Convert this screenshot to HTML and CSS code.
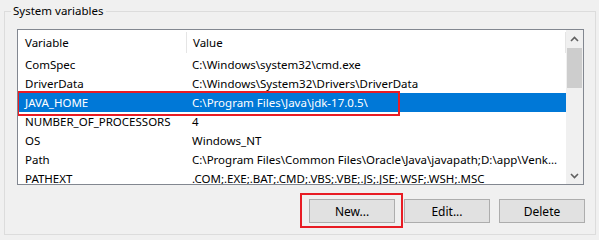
FILE: index.html
```html
<!DOCTYPE html>
<html>
<head>
    <title>Environment Variables</title>
    <link rel="stylesheet" href="styles.css">
</head>
<body>
    <fieldset class="group">
        <legend>System variables</legend>
        <div class="list">
            <div class="list-body">
                <div class="row head">
                    <span class="col-name">Variable</span>
                    <span class="col-value">Value</span>
                </div>
                <div class="row">
                    <span class="col-name">ComSpec</span>
                    <span class="col-value">C:\Windows\system32\cmd.exe</span>
                </div>
                <div class="row">
                    <span class="col-name">DriverData</span>
                    <span class="col-value">C:\Windows\System32\Drivers\DriverData</span>
                </div>
                <div class="row selected">
                    <span class="col-name">JAVA_HOME</span>
                    <span class="col-value">C:\Program Files\Java\jdk-17.0.5\</span>
                    <span class="mark mark-row"></span>
                </div>
                <div class="row">
                    <span class="col-name">NUMBER_OF_PROCESSORS</span>
                    <span class="col-value">4</span>
                </div>
                <div class="row">
                    <span class="col-name">OS</span>
                    <span class="col-value">Windows_NT</span>
                </div>
                <div class="row">
                    <span class="col-name">Path</span>
                    <span class="col-value">C:\Program Files\Common Files\Oracle\Java\javapath;D:\app\Venk...</span>
                </div>
                <div class="row">
                    <span class="col-name">PATHEXT</span>
                    <span class="col-value">.COM;.EXE;.BAT;.CMD;.VBS;.VBE;.JS;.JSE;.WSF;.WSH;.MSC</span>
                </div>
            </div>
            <div class="scrollbar">
                <span class="arrow">
                    <svg width="9" height="6" viewBox="0 0 9 6"><polyline points="1,5 4.5,1.5 8,5" fill="none" stroke="#606060" stroke-width="1.6"/></svg>
                </span>
                <span class="thumb"></span>
                <span class="track"></span>
                <span class="arrow">
                    <svg width="9" height="6" viewBox="0 0 9 6"><polyline points="1,1 4.5,4.5 8,1" fill="none" stroke="#606060" stroke-width="1.6"/></svg>
                </span>
            </div>
        </div>
        <div class="buttons">
            <button class="btn">New...<span class="mark mark-btn"></span></button>
            <button class="btn">Edit...</button>
            <button class="btn">Delete</button>
        </div>
    </fieldset>
</body>
</html>
```

FILE: styles.css
```css
body {
    margin: 0;
    background-color: #f0f0f0;
    font-family: "Noto Sans", "Liberation Sans", sans-serif;
    font-size: 11.5px;
    color: #000;
}
.group {
    margin: 3px 3px 0 4px;
    padding: 0 0 13px 0;
    height: 217px;
    border: 1px solid #dcdcdc;
}
.group legend {
    margin-left: 6px;
    padding: 0 2px;
    line-height: 16px;
}
.list {
    display: flex;
    margin: 10px 0 0 12px;
    width: 565px;
    height: 154px;
    border: 1px solid #828790;
    background-color: #fff;
    overflow: hidden;
}
.list-body {
    flex: 1;
    overflow: hidden;
}
.row {
    position: relative;
    display: flex;
    height: 19px;
    line-height: 19px;
    white-space: nowrap;
}
.row.head {
    height: 25px;
    line-height: 25px;
}
.col-name {
    width: 161px;
    padding-left: 7px;
    flex-shrink: 0;
}
.col-value {
    flex: 1;
    padding-left: 6px;
    overflow: hidden;
}
.head .col-name {
    border-right: 1px solid #e5e5e5;
    margin: 2px 0;
    line-height: 21px;
}
.head .col-value {
    border-right: 1px solid #e5e5e5;
    margin: 2px 0;
    line-height: 21px;
}
.selected {
    background-color: #0078d7;
    color: #fff;
}
.scrollbar {
    display: flex;
    flex-direction: column;
    width: 17px;
    background-color: #f0f0f0;
}
.arrow {
    display: flex;
    align-items: center;
    justify-content: center;
    height: 17px;
}
.thumb {
    height: 40px;
    margin: 1px 1px 0 1px;
    background-color: #cdcdcd;
}
.track {
    flex: 1;
}
.buttons {
    display: flex;
    justify-content: flex-end;
    gap: 9px;
    margin: 14px 10px 0 0;
}
.btn {
    position: relative;
    width: 86px;
    height: 24px;
    padding: 0;
    border: 1px solid #adadad;
    background-color: #e1e1e1;
    font-family: inherit;
    font-size: 12px;
    color: #000;
}
.mark {
    position: absolute;
    border: 2px solid #e81c24;
    box-sizing: border-box;
}
.mark-row {
    left: -1px;
    top: -2px;
    width: 383px;
    height: 25px;
}
.mark-btn {
    left: -10px;
    top: -7px;
    width: 103px;
    height: 35px;
}
```
